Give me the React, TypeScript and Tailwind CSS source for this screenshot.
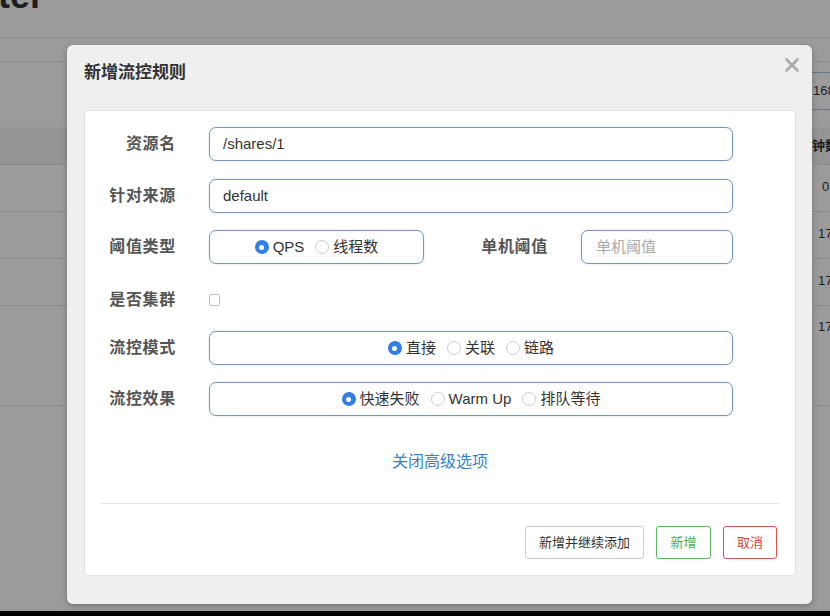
import React, { useState } from "react";

const font = "font-['Liberation_Sans','Noto_Sans_CJK_SC',sans-serif]";

type Opt = { label: string; value: string };

const Radio = ({ checked }: { checked: boolean }) =>
  checked ? (
    <span className="flex h-[14px] w-[14px] items-center justify-center rounded-full bg-[#2f7fe6]">
      <span className="h-[5px] w-[5px] rounded-full bg-white" />
    </span>
  ) : (
    <span className="h-[14px] w-[14px] rounded-full border border-[#cfcfcf] bg-white" />
  );

const RadioGroup = ({ options, value }: { options: Opt[]; value: string }) => (
  <div className="flex h-full items-center justify-center gap-[11px]">
    {options.map((o) => (
      <label key={o.value} className="flex items-center gap-[4px] text-[15px] text-[#333]">
        <Radio checked={o.value === value} />
        <span>{o.label}</span>
      </label>
    ))}
  </div>
);

const boxCls =
  "h-[34px] rounded-[7px] border border-[#7896bd] bg-white shadow-[0_0_2px_rgba(102,150,210,0.35)]";

const Label = ({ children, w = "w-[75px]" }: { children: React.ReactNode; w?: string }) => (
  <div className={`${w} shrink-0 text-right text-[16px] font-semibold tracking-[0.7px] text-[#555]`}>
    {children}
  </div>
);

const App: React.FC = () => {
  const [resource] = useState("/shares/1");
  const [limitApp] = useState("default");

  return (
    <div className={`relative h-[616px] w-[830px] overflow-hidden bg-[#9b9b9b] ${font}`}>
      {/* background page (dimmed) */}
      <div className="flex h-full flex-col">
        <div className="h-[38px] border-b border-[#8d8d8d]">
          <div className="-ml-[2px] -mt-[22px] whitespace-nowrap text-[36px] font-bold leading-none text-[#1e1e1e]">ter</div>
        </div>
        <div className="h-[24px] border-b border-[#8d8d8d]" />
        <div className="h-[65px] pt-[10px]">
          <div className="ml-[806px] flex h-[38px] items-center whitespace-nowrap border-y border-[#66788b] pl-[7px] text-[13px] text-[#1e1e1e]">
            168
          </div>
        </div>
        <div className="flex h-[38px] items-center whitespace-nowrap border-b border-[#8d8d8d] bg-[#959595]">
          <span className="ml-[812px] text-[13px] font-semibold text-[#1e1e1e]">钟数</span>
        </div>
        {["0", "17", "17"].map((t, i) => (
          <div key={i} className="h-[47px] whitespace-nowrap border-b border-[#8d8d8d] pt-[9px]">
            <span className={`${i === 0 ? "ml-[822px]" : "ml-[818px]"} text-[13px] text-[#1e1e1e]`}>{t}</span>
          </div>
        ))}
        <div className="h-[100px] whitespace-nowrap border-b border-[#8d8d8d] pt-[8px]">
          <span className="ml-[818px] text-[13px] text-[#1e1e1e]">17</span>
        </div>
        <div className="flex-1" />
        <div className="h-[5px] bg-black" />
      </div>

      {/* modal */}
      <div className="absolute left-[67px] top-[45px] h-[559px] w-[745px] rounded-[6px] bg-[#efefef] px-[17px] pt-[17px] shadow-[0_2px_6px_rgba(0,0,0,0.25)]">
        <button className="absolute right-[13px] top-[13px]">
          <svg width="14" height="14" viewBox="0 0 14 14">
            <path d="M1.5 1.5 L12.5 12.5 M12.5 1.5 L1.5 12.5" stroke="#a8a8a8" strokeWidth="2.6" strokeLinecap="round" />
          </svg>
        </button>
        <h4 className="text-[17px] font-semibold leading-[22px] text-[#333]">新增流控规则</h4>

        <div className="mt-[26px] -mr-[1px] h-[466px] rounded-[4px] border border-[#e2e2e2] bg-white px-[16px] pt-[16px]">
          {/* 资源名 */}
          <div className="mb-[18px] flex h-[34px] items-center">
            <Label>资源名</Label>
            <div className={`ml-[33px] flex w-[524px] items-center px-[13px] text-[15px] text-[#333] ${boxCls}`}>
              {resource}
            </div>
          </div>

          {/* 针对来源 */}
          <div className="mb-[17px] flex h-[34px] items-center">
            <Label>针对来源</Label>
            <div className={`ml-[33px] flex w-[524px] items-center px-[13px] text-[15px] text-[#333] ${boxCls}`}>
              {limitApp}
            </div>
          </div>

          {/* 阈值类型 */}
          <div className="flex h-[34px] items-center">
            <Label>阈值类型</Label>
            <div className={`ml-[33px] w-[215px] ${boxCls}`}>
              <RadioGroup
                value="qps"
                options={[
                  { label: "QPS", value: "qps" },
                  { label: "线程数", value: "thread" },
                ]}
              />
            </div>
            <Label w="w-[124px]">单机阈值</Label>
            <div className={`ml-[33px] flex w-[152px] items-center px-[14px] text-[15px] text-[#aaa] ${boxCls}`}>
              单机阈值
            </div>
          </div>

          {/* 是否集群 */}
          <div className="mt-[19px] flex h-[34px] items-center">
            <Label>是否集群</Label>
            <span className="ml-[33px] h-[12px] w-[11px] rounded-[2px] border border-[#bdbdbd] bg-white" />
          </div>

          {/* 流控模式 */}
          <div className="mt-[14px] flex h-[34px] items-center">
            <Label>流控模式</Label>
            <div className={`ml-[33px] w-[524px] ${boxCls}`}>
              <RadioGroup
                value="direct"
                options={[
                  { label: "直接", value: "direct" },
                  { label: "关联", value: "relate" },
                  { label: "链路", value: "chain" },
                ]}
              />
            </div>
          </div>

          {/* 流控效果 */}
          <div className="mt-[17px] flex h-[34px] items-center">
            <Label>流控效果</Label>
            <div className={`ml-[33px] w-[524px] ${boxCls}`}>
              <RadioGroup
                value="fast"
                options={[
                  { label: "快速失败", value: "fast" },
                  { label: "Warm Up", value: "warm" },
                  { label: "排队等待", value: "queue" },
                ]}
              />
            </div>
          </div>

          <div className="mt-[35px] text-center text-[16px] leading-[22px] text-[#3a7fc2]">关闭高级选项</div>

          <div className="mt-[30px] border-t border-[#e6e6e6]" />

          <div className="mt-[22px] flex justify-end gap-[12px] pr-[2px]">
            <button className="h-[33px] w-[119px] rounded-[3px] border border-[#ccc] bg-white text-[13px] text-[#333]">
              新增并继续添加
            </button>
            <button className="h-[33px] w-[55px] rounded-[3px] border border-[#5cb85c] bg-white text-[13px] text-[#4cae4c]">
              新增
            </button>
            <button className="h-[33px] w-[54px] rounded-[3px] border border-[#d9534f] bg-white text-[13px] text-[#d43f3a]">
              取消
            </button>
          </div>
        </div>
      </div>
    </div>
  );
};

export default App;
